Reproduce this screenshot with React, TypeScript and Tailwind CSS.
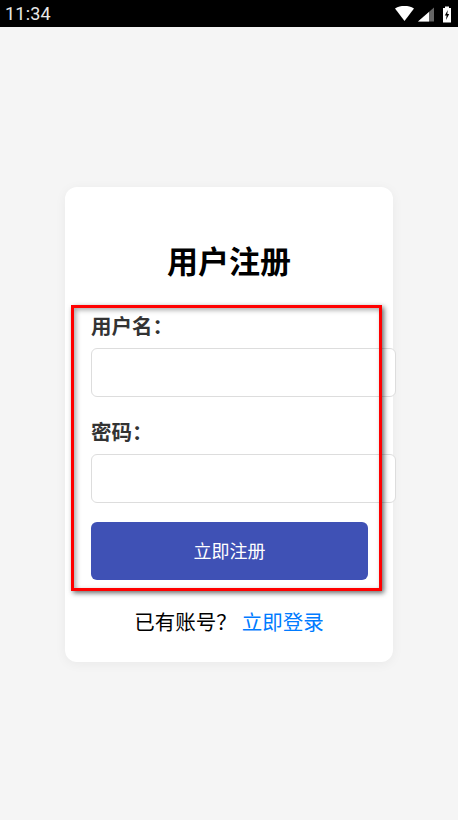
export default function App() {
  return (
    <div className="relative h-[820px] w-[458px] overflow-hidden bg-[#f5f5f5] font-['Noto_Sans_CJK_SC',sans-serif]">
      <div className="flex h-[27px] items-center justify-between bg-black pl-[5px] pr-[5px] text-white">
        <span className="font-['Roboto',sans-serif] text-[18px] leading-none tracking-[0.2px] text-[#e8e8e8]">11:34</span>
        <svg width="62" height="22" viewBox="0 0 62 22">
          <path d="M4 5.5C7 3.6 10 3 13.5 3S20 3.6 23 5.5L13.5 18Z" fill="#fff" />
          <path d="M27 18.5L43 4.5V18.5Z" fill="#666" />
          <path d="M27 18.5L38 8.9V18.5Z" fill="#fff" />
          <path d="M52 5H54V3.5H58V5H60V19.5H52Z" fill="#fff" />
          <path d="M56.8 7L53.8 12.6H55.6L55 17L58.2 11H56.3Z" fill="#000" />
        </svg>
      </div>

      <div className="flex justify-center pt-[160px]">
        <div className="h-[475px] w-[328px] rounded-[12px] bg-white px-[26px] pt-[50px] shadow-[0_2px_12px_rgba(0,0,0,0.05)]">
          <h1 className="text-center text-[31px] font-bold leading-[46px] text-black">用户注册</h1>

          <label className="mt-[27px] block text-[20.5px] font-bold leading-[30px] text-[#333]">用户名：</label>
          <input className="mt-[8px] block h-[49px] w-[305px] rounded-[6px] border border-[#ddd] bg-white" />

          <label className="mt-[19px] block text-[20.5px] font-bold leading-[30px] text-[#333]">密码：</label>
          <input className="mt-[8px] block h-[49px] w-[305px] rounded-[6px] border border-[#ddd] bg-white" />

          <button className="mt-[19px] block h-[58px] w-[277px] rounded-[6px] bg-[#3f51b5] pb-[1px] text-[18px] text-white">立即注册</button>

          <p className="mt-[26px] text-center text-[20.5px] leading-[30px] text-black">
            已有账号？<a className="ml-[5px] text-[#007bff]">立即登录</a>
          </p>
        </div>
      </div>

      <div className="absolute left-[71px] top-[305px] h-[286px] w-[311px] border-[3px] border-[#f00] shadow-[2px_2px_5px_rgba(0,0,0,0.6),inset_2px_2px_5px_rgba(0,0,0,0.35)]" />
    </div>
  )
}
